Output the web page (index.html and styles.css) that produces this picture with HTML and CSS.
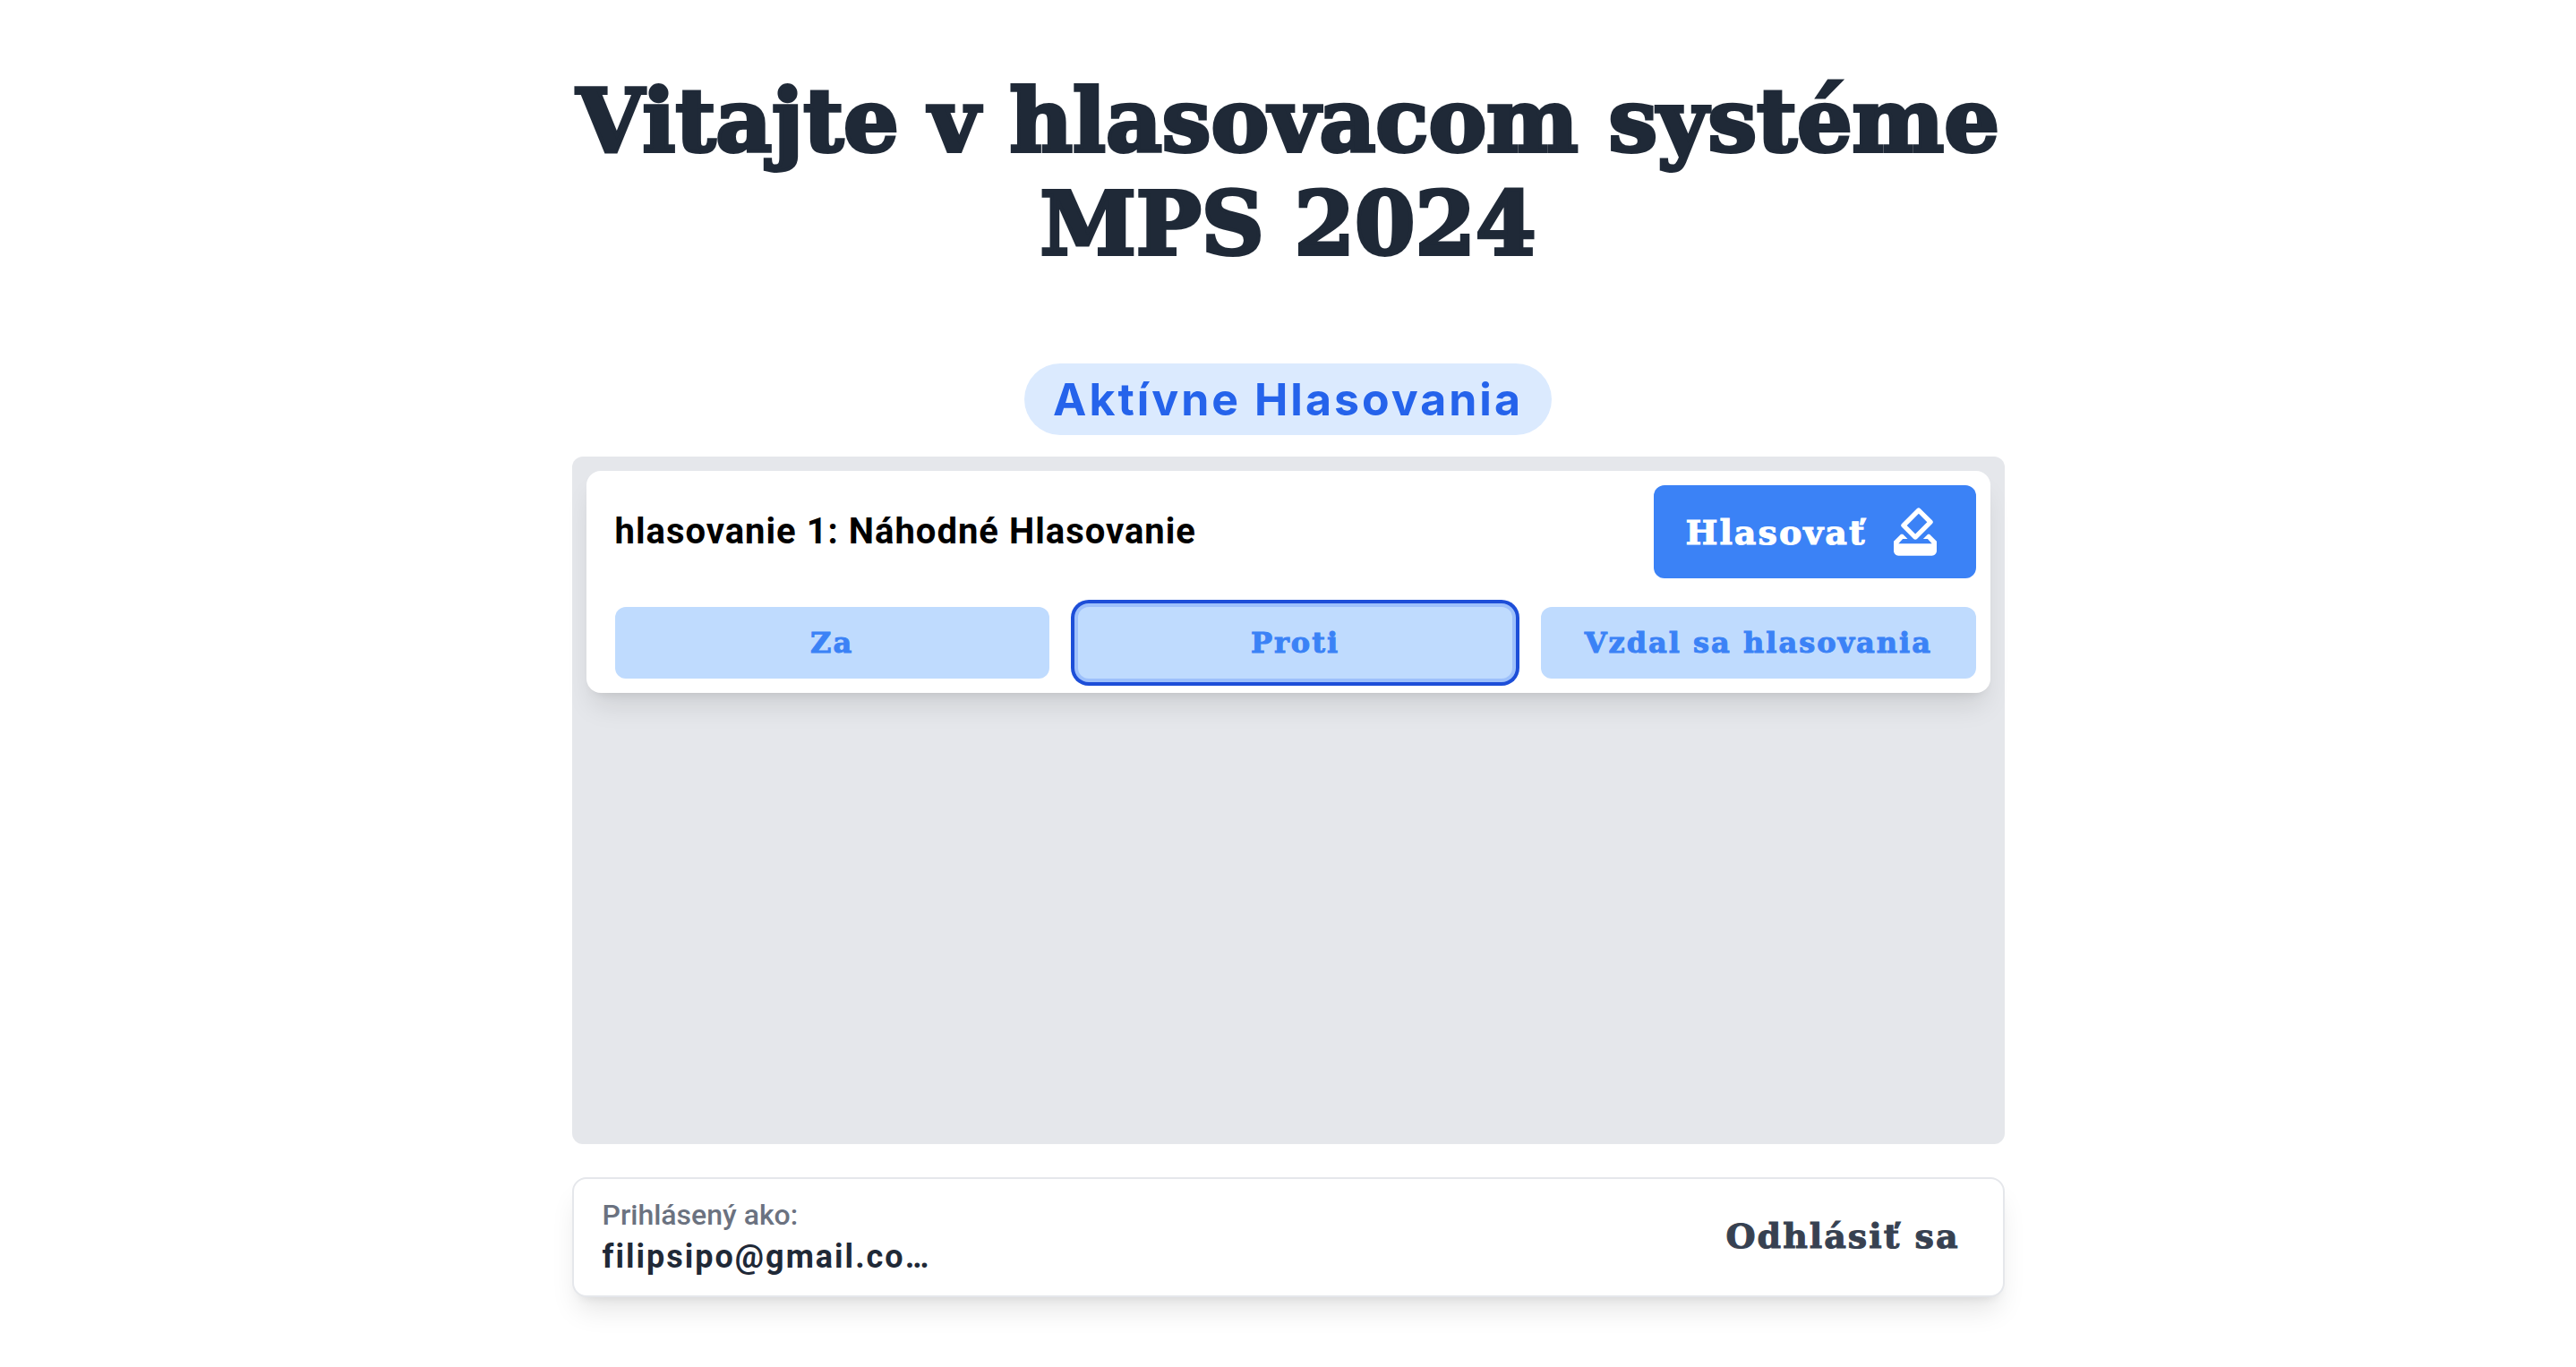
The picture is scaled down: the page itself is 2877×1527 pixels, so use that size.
FILE: index.html
```html
<!DOCTYPE html>
<html lang="sk">
<head>
  <meta charset="utf-8">
  <meta name="viewport" content="width=device-width, initial-scale=1">
  <title>Hlasovací systém MPS 2024</title>
  <link rel="stylesheet" href="styles.css">
</head>
<body>
  <div class="page">
    <h1 class="title">Vitajte v hlasovacom systéme MPS 2024</h1>
    <main class="votes">
      <h2 class="badge">Aktívne Hlasovania</h2>
      <section class="panel">
        <article class="card">
          <div class="card-head">
            <h3 class="card-title">hlasovanie 1: Náhodné Hlasovanie</h3>
            <button type="button" class="vote-button">
              <span>Hlasovať</span>
              <svg class="vote-icon" viewBox="0 0 24 24" fill="currentColor" aria-hidden="true">
                <path d="M18 13h-.68l-2 2h1.91L19 17H5l1.78-2h2.05l-2-2H6l-3 3v4c0 1.1.89 2 1.99 2H19c1.1 0 2-.89 2-2v-4l-3-3zm-1-5.05l-4.95 4.95-3.54-3.54 4.95-4.95L17 7.95zm-4.24-5.66L6.39 8.66a.996.996 0 0 0 0 1.41l4.95 4.95c.39.39 1.02.39 1.41 0l6.36-6.36a.996.996 0 0 0 0-1.41L14.16 2.3a.975.975 0 0 0-1.4-.01z"/>
              </svg>
            </button>
          </div>
          <div class="options">
            <button type="button" class="option">Za</button>
            <button type="button" class="option option-selected" aria-pressed="true">Proti</button>
            <button type="button" class="option">Vzdal sa hlasovania</button>
          </div>
        </article>
      </section>
    </main>
    <footer class="account">
      <div class="user">
        <span class="user-label">Prihlásený ako:</span>
        <span class="user-email">filipsipo@gmail.co…</span>
      </div>
      <button type="button" class="logout">Odhlásiť sa</button>
    </footer>
  </div>
</body>
</html>
```
FILE: styles.css
```css
* {
  box-sizing: border-box;
}

:root {
  --slab: "DejaVu Serif", serif;
  --shadow: 0 20px 30px -6px rgba(0, 0, 0, 0.1), 0 8px 12px -8px rgba(0, 0, 0, 0.1);
}

body {
  margin: 0;
  background: #fff;
  color: #000;
  font-family: Roboto, "Open Sans", sans-serif;
}

h1,
h2,
h3 {
  margin: 0;
}

button {
  border: 0;
  cursor: pointer;
  font-family: var(--slab);
  font-weight: 700;
  letter-spacing: 2px;
  -webkit-text-stroke: 1px currentColor;
}

.page {
  display: flex;
  flex-direction: column;
  width: 100%;
  max-width: 1600px;
  min-height: 100vh;
  margin: 0 auto;
  padding: 78px 0;
}

.title {
  color: #1f2937;
  font-family: var(--slab);
  font-size: 97px;
  line-height: 115px;
  text-align: center;
  -webkit-text-stroke: 4px currentColor;
}

.votes {
  display: flex;
  flex: 1;
  flex-direction: column;
  align-items: center;
  gap: 24px;
  margin-top: 98px;
}

.badge {
  padding: 0 32px;
  border-radius: 40px;
  background: #dbeafe;
  color: #2563eb;
  font-family: Inter, sans-serif;
  font-size: 50px;
  line-height: 80px;
  letter-spacing: 3px;
}

.panel {
  flex: 1;
  width: 100%;
  padding: 16px;
  border-radius: 12px;
  background: #e5e7eb;
}

.card {
  display: flex;
  flex-direction: column;
  gap: 32px;
  padding: 16px 16px 16px 32px;
  border-radius: 16px;
  background: #fff;
  box-shadow: var(--shadow);
}

.card-head {
  display: flex;
  align-items: center;
  justify-content: space-between;
}

.card-title {
  font-size: 40px;
  line-height: 56px;
  letter-spacing: 1px;
}

.vote-button {
  display: flex;
  align-items: center;
  gap: 22px;
  padding: 20px 36px;
  border-radius: 12px;
  background: #3b82f6;
  color: #fff;
  font-size: 38px;
}

.vote-icon {
  width: 64px;
  height: 64px;
}

.options {
  display: grid;
  grid-template-columns: repeat(3, 1fr);
  gap: 32px;
}

.option {
  height: 80px;
  padding: 0 16px;
  border-radius: 12px;
  background: #bfdbfe;
  color: #3b82f6;
  font-size: 32px;
}

.option-selected {
  box-shadow: 0 0 0 4px #9dc0fb, 0 0 0 8px #1d4ed8;
}

.account {
  display: flex;
  align-items: center;
  justify-content: space-between;
  margin-top: 37px;
  padding: 16px 48px 20px 32px;
  border: 2px solid #e5e7eb;
  border-radius: 16px;
  background: #fff;
  box-shadow: var(--shadow);
}

.user {
  display: flex;
  flex-direction: column;
}

.user-label {
  color: #6b7280;
  font-size: 32px;
  font-weight: 500;
  line-height: 48px;
}

.user-email {
  color: #1f2937;
  font-size: 36px;
  font-weight: 700;
  line-height: 46px;
  letter-spacing: 2px;
}

.logout {
  padding: 0;
  background: transparent;
  color: #374151;
  font-size: 38px;
}
```
